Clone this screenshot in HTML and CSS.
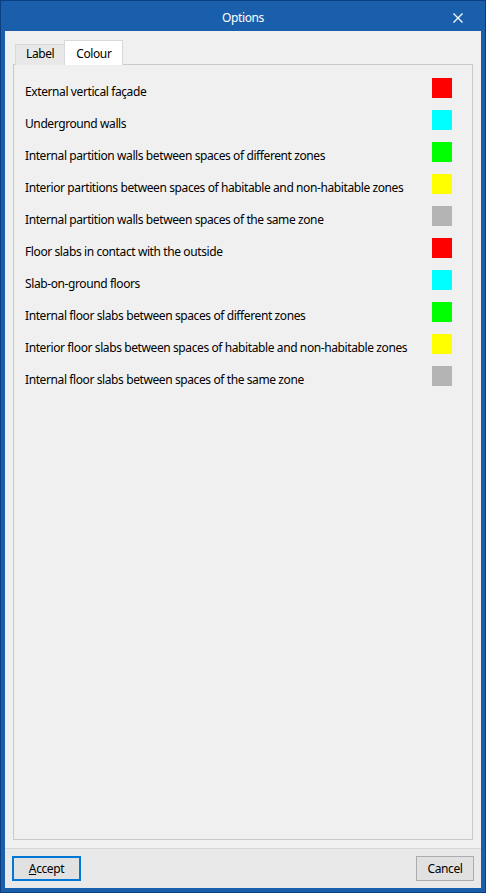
FILE: index.html
```html
<!DOCTYPE html>
<html>
<head>
<meta charset="utf-8">
<link rel="stylesheet" href="styles.css">
</head>
<body>
<div class="window">
  <div class="titlebar">
    <span class="title">Options</span>
    <svg class="close" width="10" height="10" viewBox="0 0 10 10"><path d="M0.5 0.5 L9.5 9.5 M9.5 0.5 L0.5 9.5" stroke="#fff" stroke-width="1.3"/></svg>
  </div>
  <div class="client">
    <div class="main">
      <div class="tabs">
        <div class="tab">Label</div>
        <div class="tab active">Colour</div>
      </div>
      <div class="panel">
        <div class="row"><span class="label">External vertical façade</span><span class="swatch red"></span></div>
        <div class="row"><span class="label">Underground walls</span><span class="swatch cyan"></span></div>
        <div class="row"><span class="label">Internal partition walls between spaces of different zones</span><span class="swatch green"></span></div>
        <div class="row"><span class="label">Interior partitions between spaces of habitable and non-habitable zones</span><span class="swatch yellow"></span></div>
        <div class="row"><span class="label">Internal partition walls between spaces of the same zone</span><span class="swatch grey"></span></div>
        <div class="row"><span class="label">Floor slabs in contact with the outside</span><span class="swatch red"></span></div>
        <div class="row"><span class="label">Slab-on-ground floors</span><span class="swatch cyan"></span></div>
        <div class="row"><span class="label">Internal floor slabs between spaces of different zones</span><span class="swatch green"></span></div>
        <div class="row"><span class="label">Interior floor slabs between spaces of habitable and non-habitable zones</span><span class="swatch yellow"></span></div>
        <div class="row"><span class="label">Internal floor slabs between spaces of the same zone</span><span class="swatch grey"></span></div>
      </div>
    </div>
    <div class="footer">
      <button class="btn default"><u>A</u>ccept</button>
      <button class="btn cancel">Cancel</button>
    </div>
  </div>
</div>
</body>
</html>
```
FILE: styles.css
```css
html, body {
  margin: 0;
  padding: 0;
}
body {
  font-family: "Noto Sans", "Open Sans", sans-serif;
  font-size: 12px;
  letter-spacing: -0.4px;
  color: #000;
}
.window {
  width: 486px;
  height: 893px;
  box-sizing: border-box;
  background: #1a5fab;
  border: 1px solid #0b3f7f;
  padding: 0 4px 4px 4px;
  display: flex;
  flex-direction: column;
}
.titlebar {
  height: 30px;
  flex: none;
  display: flex;
  align-items: center;
  justify-content: center;
  position: relative;
  color: #fff;
}
.title {
  font-size: 12px;
  padding-top: 3px;
}
.close {
  position: absolute;
  right: 18px;
  top: 12px;
}
.client {
  flex: 1;
  background: #f0f0f0;
  display: flex;
  flex-direction: column;
}
.main {
  flex: 1;
  padding: 10px 8px 8px 8px;
  display: flex;
  flex-direction: column;
  border-bottom: 1px solid #d8d8d8;
}
.tabs {
  display: flex;
  align-items: flex-end;
  padding-left: 2px;
  height: 24px;
  margin-bottom: -1px;
  position: relative;
  z-index: 1;
}
.tab {
  height: 21px;
  line-height: 18px;
  padding: 0 10px 0 10px;
  box-sizing: border-box;
  background: #e8e8e8;
  border: 1px solid #d9d9d9;
  border-bottom: none;
  border-right: none;
}
.tab.active {
  height: 25px;
  line-height: 25px;
  background: #fff;
  border-right: 1px solid #d9d9d9;
  padding: 0 11px 0 11px;
}
.panel {
  flex: 1;
  border: 1px solid #cacaca;
  padding: 7px 20px 0 11px;
}
.row {
  height: 32px;
  display: flex;
  align-items: center;
  justify-content: space-between;
}
.label {
  padding-top: 7px;
  white-space: nowrap;
}
.swatch {
  width: 20px;
  height: 20px;
  flex: none;
}
.red { background: #ff0000; }
.cyan { background: #00ffff; }
.green { background: #00ff00; }
.yellow { background: #ffff00; }
.grey { background: #b4b4b4; }
.footer {
  height: 39px;
  flex: none;
  background: #e9e9e9;
  display: flex;
  justify-content: space-between;
  align-items: flex-start;
  padding: 7px 7px 0 7px;
  box-sizing: border-box;
}
.btn {
  font-family: inherit;
  font-size: 12px;
  letter-spacing: inherit;
  background: #e1e1e1;
  color: #000;
  height: 25px;
  box-sizing: border-box;
  padding: 0;
  margin: 0;
  border-radius: 0;
}
.btn.default {
  width: 69px;
  border: 2px solid #0078d7;
}
.btn.cancel {
  width: 58px;
  border: 1px solid #adadad;
}
```
